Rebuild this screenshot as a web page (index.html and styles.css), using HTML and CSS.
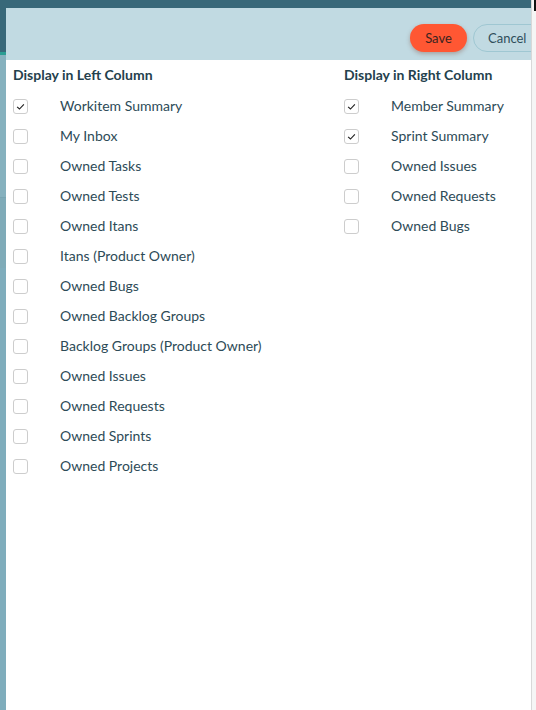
FILE: index.html
```html
<!DOCTYPE html>
<html>
<head>
<meta charset="utf-8">
<link rel="stylesheet" href="styles.css">
</head>
<body>
<div class="screen">
  <div class="topbar"></div>
  <div class="side-left">
    <div class="sl-dark"></div>
    <div class="sl-line"></div>
    <div class="sl-a"></div>
    <div class="sl-b"></div>
    <div class="sl-c"></div>
  </div>
  <div class="modal">
    <div class="modal-header">
      <div class="actions">
        <button class="btn btn-save">Save</button>
        <button class="btn btn-cancel">Cancel</button>
      </div>
    </div>
    <div class="modal-body">
      <div class="col">
        <div class="col-title">Display in Left Column</div>
        <label class="row"><span class="box checked"><svg viewBox="0 0 15 15"><path d="M3.6 7.9 L6.3 10.4 L11.4 5"/></svg></span><span class="label">Workitem Summary</span></label>
        <label class="row"><span class="box"></span><span class="label">My Inbox</span></label>
        <label class="row"><span class="box"></span><span class="label">Owned Tasks</span></label>
        <label class="row"><span class="box"></span><span class="label">Owned Tests</span></label>
        <label class="row"><span class="box"></span><span class="label">Owned Itans</span></label>
        <label class="row"><span class="box"></span><span class="label">Itans (Product Owner)</span></label>
        <label class="row"><span class="box"></span><span class="label">Owned Bugs</span></label>
        <label class="row"><span class="box"></span><span class="label">Owned Backlog Groups</span></label>
        <label class="row"><span class="box"></span><span class="label">Backlog Groups (Product Owner)</span></label>
        <label class="row"><span class="box"></span><span class="label">Owned Issues</span></label>
        <label class="row"><span class="box"></span><span class="label">Owned Requests</span></label>
        <label class="row"><span class="box"></span><span class="label">Owned Sprints</span></label>
        <label class="row"><span class="box"></span><span class="label">Owned Projects</span></label>
      </div>
      <div class="col">
        <div class="col-title">Display in Right Column</div>
        <label class="row"><span class="box checked"><svg viewBox="0 0 15 15"><path d="M3.6 7.9 L6.3 10.4 L11.4 5"/></svg></span><span class="label">Member Summary</span></label>
        <label class="row"><span class="box checked"><svg viewBox="0 0 15 15"><path d="M3.6 7.9 L6.3 10.4 L11.4 5"/></svg></span><span class="label">Sprint Summary</span></label>
        <label class="row"><span class="box"></span><span class="label">Owned Issues</span></label>
        <label class="row"><span class="box"></span><span class="label">Owned Requests</span></label>
        <label class="row"><span class="box"></span><span class="label">Owned Bugs</span></label>
      </div>
    </div>
  </div>
  <div class="side-right"><div class="sr-black"></div></div>
</div>
</body>
</html>
```

FILE: styles.css
```css
html, body {
  margin: 0;
  padding: 0;
  width: 536px;
  height: 710px;
  overflow: hidden;
  font-family: Lato, "Liberation Sans", sans-serif;
}

.screen {
  display: grid;
  grid-template-columns: 6px 525px 5px;
  grid-template-rows: 8px 702px;
  width: 536px;
  height: 710px;
}

.topbar {
  grid-column: 1 / 3;
  grid-row: 1;
  background: #386879;
}

.side-left {
  grid-column: 1;
  grid-row: 2;
  display: flex;
  flex-direction: column;
}
.sl-dark { height: 44px; background: #386879; }
.sl-line { height: 3px; background: #2a9d93; }
.sl-a { height: 142px; background: #86b1be; }
.sl-b { height: 70px; background: #7fabb8; border-top: 1px solid #79a5b2; }
.sl-c { flex: 1; background: #7fadbc; }

.side-right {
  grid-column: 3;
  grid-row: 1 / 3;
  background: #f5f5f5;
  border-left: 1px solid #d8d8d8;
  display: flex;
  justify-content: flex-end;
}
.sr-black { width: 2px; height: 11px; background: #111; }

.modal {
  grid-column: 2;
  grid-row: 2;
  background: #fff;
  overflow: hidden;
  display: flex;
  flex-direction: column;
}

.modal-header {
  height: 52px;
  background: #c1dae2;
  display: flex;
  align-items: center;
  justify-content: flex-end;
  padding-top: 7px;
  box-sizing: border-box;
}

.actions {
  display: flex;
  gap: 6px;
  margin-right: -16px;
}

.btn {
  height: 28px;
  border-radius: 14px;
  font-family: Lato, "Liberation Sans", sans-serif;
  font-size: 13px;
  padding: 0 14px;
  cursor: pointer;
}

.btn-save {
  width: 57px;
  background: #ff5733;
  border: none;
  color: #3a2420;
  box-shadow: 0 2px 4px rgba(120, 60, 40, 0.35);
}

.btn-cancel {
  width: 74px;
  background: transparent;
  border: 1px solid #9fc7d2;
  color: #2f4e5b;
  text-align: left;
}

.modal-body {
  display: grid;
  grid-template-columns: 331px 1fr;
  padding-left: 7px;
}

.col {
  display: flex;
  flex-direction: column;
}

.col-title {
  height: 30px;
  line-height: 30px;
  font-size: 14px;
  font-weight: 700;
  color: #24414d;
}

.row {
  display: flex;
  align-items: center;
  height: 30px;
  gap: 32px;
}

.box {
  width: 15px;
  height: 15px;
  box-sizing: border-box;
  border: 1px solid #cdcdcd;
  border-radius: 3px;
  background: #fff;
  display: flex;
  flex: none;
  margin-top: 2px;
}
.box svg {
  width: 13px;
  height: 13px;
}
.box path {
  fill: none;
  stroke: #1e1e1e;
  stroke-width: 1.3;
}

.label {
  font-size: 14px;
  color: #2d4b57;
}
```
